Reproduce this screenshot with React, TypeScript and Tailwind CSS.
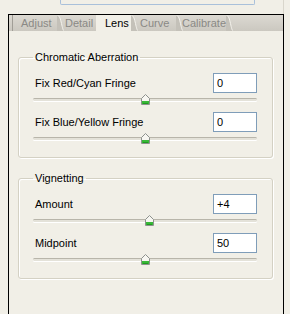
const groups = [
  {
    title: "Chromatic Aberration",
    rows: [
      { label: "Fix Red/Cyan Fringe", value: "0", pos: 0.5 },
      { label: "Fix Blue/Yellow Fringe", value: "0", pos: 0.5 },
    ],
  },
  {
    title: "Vignetting",
    rows: [
      { label: "Amount", value: "+4", pos: 0.52 },
      { label: "Midpoint", value: "50", pos: 0.5 },
    ],
  },
];

const tabs = [
  { name: "Adjust", w: "w-[45px]", pl: "pl-[8px]" },
  { name: "Detail", w: "w-[39px]", pl: "pl-[8px]" },
  { name: "Lens", w: "w-[35px]", pl: "pl-[9px]", active: true },
  { name: "Curve", w: "w-[45px]", pl: "pl-[9px]" },
  { name: "Calibrate", w: "w-[50px]", pl: "pl-[6px]" },
];

function Notch() {
  return (
    <svg width="7" height="16" viewBox="0 0 7 16" className="shrink-0">
      <path d="M0 0 C2 0 3 3 4 8 C5 13 6 16 7 16 L0 16 Z" fill="#c4c1b9" />
      <path d="M0.5 0.5 C2.5 0.5 3.5 4 4.5 8.5 C5.5 13 6 15.5 7 15.5" fill="none" stroke="#f4f2ec" strokeWidth="1" />
    </svg>
  );
}

function Thumb() {
  return (
    <svg width="9" height="11" viewBox="0 0 9 11">
      <path d="M4.5 0.5 L8.5 4.5 L8.5 10.5 L0.5 10.5 L0.5 4.5 Z" fill="#f7f6f1" stroke="#8d918d" />
      <rect x="1" y="7" width="7" height="3" fill="#38b838" />
      <rect x="2" y="9" width="5" height="1" fill="#1f9a1f" />
    </svg>
  );
}

function Slider({ pos }: { pos: number }) {
  return (
    <div className="relative h-[19px]">
      <div className="absolute left-0 right-0 top-[5px] h-[3px] rounded-[2px] border-t border-[#b8b5aa] bg-[#e4e2d9] shadow-[0_1px_0_#ffffff]" />
      <div
        className="absolute top-[1px] -ml-[4px]"
        style={{ left: `${pos * 100}%` }}
      >
        <Thumb />
      </div>
    </div>
  );
}

export default function App() {
  return (
    <div
      className="w-[290px] h-[314px] overflow-hidden bg-[#f1efe7] text-[11px] text-black"
      style={{ fontFamily: '"Liberation Sans", Arial, sans-serif' }}
    >
      <div className="w-[284px] h-[14px] border-r border-[#d9d6cc]">
        <div className="ml-[60px] w-[195px] h-[5px] border-x border-b border-[#a9c0da] rounded-b-[2px]" />
      </div>
      <div className="ml-[8px] w-[276px] h-[300px] border-x border-t border-black flex flex-col">
        <div className="flex h-[16px] bg-gradient-to-b from-[#dcd9d2] to-[#cbc8c0]">
          <div className="w-[3px]" />
          {tabs.map((t, i) => (
            <div
              key={t.name}
              className={`relative flex items-center ${t.w} ${
                t.active ? "bg-[#f1efe7] text-black" : "text-[#8a8985]"
              } ${i === 0 ? "border-l border-[#a19e97]" : ""}`}
            >
              {i > 0 && !t.active && (
                <div className="absolute left-0 top-0">
                  <Notch />
                </div>
              )}
              <span className={`relative ${t.pl}`}>{t.name}</span>
            </div>
          ))}
          <Notch />
          <div className="flex-1" />
        </div>
        <div className="flex-1 pt-[20px] pl-[9px] pr-[10px] flex flex-col gap-[14px]">
          {groups.map((g) => (
            <fieldset
              key={g.title}
              className="border border-[#d4d1c4] rounded-[3px] pl-[14px] pr-[15px] pt-[9px] pb-[6px] shadow-[inset_1px_1px_0_#ffffff,1px_1px_0_#ffffff] min-w-0"
            >
              <legend className="px-[2px] leading-[13px]">{g.title}</legend>
              {g.rows.map((r) => (
                <div key={r.label}>
                  <div className="flex items-center justify-between h-[20px]">
                    <span className="pl-[2px]">{r.label}</span>
                    <input
                      readOnly
                      value={r.value}
                      className="w-[44px] h-[20px] border border-[#7f9db9] bg-white pl-[3px] text-[11px] outline-none"
                    />
                  </div>
                  <Slider pos={r.pos} />
                </div>
              ))}
            </fieldset>
          ))}
        </div>
      </div>
    </div>
  );
}
